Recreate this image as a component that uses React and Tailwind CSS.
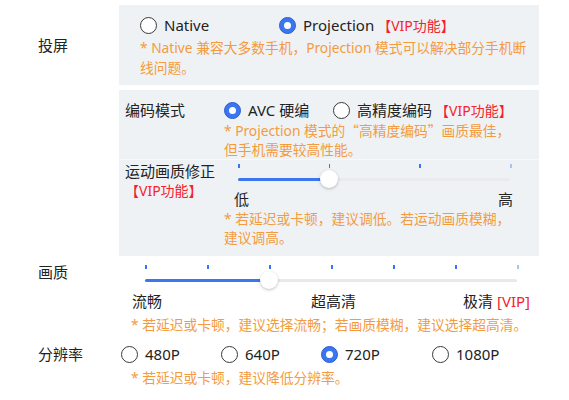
import React, { useState } from 'react';

const Radio = ({ checked, label, onClick, className = '' }) => (
    <div onClick={onClick} className={`flex items-center gap-[7px] cursor-pointer ${className}`}>
        {checked ? (
            <span className="w-[17px] h-[17px] rounded-full bg-[#3a76f0] border border-[#2d5fcf] flex items-center justify-center shrink-0">
                <span className="w-[7px] h-[7px] rounded-full bg-white" />
            </span>
        ) : (
            <span className="w-[17px] h-[17px] rounded-full bg-white border border-[#3a3a3a] shrink-0" />
        )}
        <span>{label}</span>
    </div>
);

// ticks + track + thumb, value is a tick index
const Slider = ({ width, ticks, value, dim }) => {
    const step = width / (ticks - 1);
    return (
        <div className="relative h-[26px]" style={{ width }}>
            {Array.from({ length: ticks }).map((_, i) => (
                <span
                    key={i}
                    className={`absolute top-0 h-[4px] ${i === ticks - 1 ? 'w-[2px] bg-[#a9c2f2]' : 'w-[1.5px] bg-[#3a76f0]'}`}
                    style={{ left: i * step }}
                />
            ))}
            <div className={`absolute left-0 right-0 top-[14px] h-[3px] rounded-full ${dim ? 'bg-[#e9ebee]' : 'bg-[#e8e9eb]'}`} />
            <div className="absolute left-0 top-[14px] h-[3px] rounded-full bg-[#3a76f0]" style={{ width: value * step }} />
            <div
                className="absolute top-[6px] w-[18px] h-[18px] -ml-[9px] rounded-full bg-white shadow-[0_1px_3px_rgba(0,0,0,0.25)]"
                style={{ left: value * step }}
            />
        </div>
    );
};

const VIP = ({ className = '' }) => <span className={`text-[#f5222d] text-[14px] ${className}`}>【VIP功能】</span>;

export default function App() {
    const [mode, setMode] = useState('projection');
    const [codec, setCodec] = useState('avc');
    const [res, setRes] = useState('720P');

    return (
        <div className="w-[569px] h-[400px] bg-white text-[#222] text-[15px] font-['Noto_Sans','Noto_Sans_CJK_SC',sans-serif] overflow-hidden">
            {/* 投屏 */}
            <div className="flex pt-[5px]">
                <div className="w-[119px] pl-[38px] flex items-center">投屏</div>
                <div className="w-[420px] bg-[#eff2f5] pl-[21px] pr-[2px] pt-[9px] pb-[7px]">
                    <div className="flex items-center h-[22px]">
                        <Radio checked={mode === 'native'} onClick={() => setMode('native')} label="Native" className="w-[139px]" />
                        <Radio checked={mode === 'projection'} onClick={() => setMode('projection')} label="Projection" />
                        <VIP className="ml-[3px]" />
                    </div>
                    <p className="mt-[2px] text-[13.75px] leading-[20px] text-[#f39b3e]">
                        * Native 兼容大多数手机，Projection 模式可以解决部分手机断线问题。
                    </p>
                </div>
            </div>

            {/* 编码 + 运动画质 */}
            <div className="ml-[119px] mt-[5px] w-[420px] bg-[#eff2f5]">
                <div className="flex pt-[10px] border-b border-[#f7f8fa]">
                    <div className="w-[105px] pl-[6px] leading-[21px]">编码模式</div>
                    <div className="flex-1 pr-[18px]">
                        <div className="flex items-center h-[21px]">
                            <Radio checked={codec === 'avc'} onClick={() => setCodec('avc')} label="AVC 硬编" className="w-[109px]" />
                            <Radio checked={codec === 'hq'} onClick={() => setCodec('hq')} label="高精度编码" />
                            <VIP className="ml-[3px]" />
                        </div>
                        <p className="text-[13.75px] leading-[19px] text-[#f39b3e]">
                            * Projection 模式的<span className="font-['Noto_Sans_CJK_SC']">“</span>高精度编码<span className="font-['Noto_Sans_CJK_SC']">”</span>画质最佳，但手机需要较高性能。
                        </p>
                    </div>
                </div>
                <div className="flex pt-[2px] pb-[9px]">
                    <div className="w-[105px] pl-[6px] leading-[19px]">
                        <div>运动画质修正</div>
                        <VIP />
                    </div>
                    <div className="flex-1 pr-[18px]">
                        <div className="ml-[14px] mt-[2px]">
                            <Slider width={272} ticks={4} value={1} dim />
                        </div>
                        <div className="ml-[10px] w-[279px] flex justify-between leading-[18px]">
                            <span>低</span>
                            <span>高</span>
                        </div>
                        <p className="mt-[1px] text-[13.75px] leading-[19px] text-[#f39b3e]">
                            * 若延迟或卡顿，建议调低。若运动画质模糊，建议调高。
                        </p>
                    </div>
                </div>
            </div>

            {/* 画质 */}
            <div className="flex">
                <div className="w-[119px] pl-[38px] pt-[6px] leading-[20px]">画质</div>
                <div className="flex-1">
                    <div className="ml-[26px] mt-[9px]">
                        <Slider width={372} ticks={7} value={2} />
                    </div>
                    <div className="pl-[13px] w-[411px] flex leading-[20px]">
                        <span>流畅</span>
                        <span className="ml-[149px]">超高清</span>
                        <span className="ml-auto">
                            极清 <span className="text-[#f5222d]">[VIP]</span>
                        </span>
                    </div>
                    <p className="pl-[12px] mt-[4px] text-[13.75px] leading-[20px] text-[#f39b3e]">
                        * 若延迟或卡顿，建议选择流畅；若画质模糊，建议选择超高清。
                    </p>
                </div>
            </div>

            {/* 分辨率 */}
            <div className="flex mt-[8px]">
                <div className="w-[119px] pl-[38px] leading-[22px]">分辨率</div>
                <div className="flex-1">
                    <div className="flex items-center h-[22px] ml-[2px]">
                        {['480P', '640P', '720P', '1080P'].map((r, i) => (
                            <Radio
                                key={r}
                                checked={res === r}
                                onClick={() => setRes(r)}
                                label={r}
                                className={i === 2 ? 'w-[111px]' : 'w-[100px]'}
                            />
                        ))}
                    </div>
                    <p className="pl-[12px] mt-[3px] text-[13.75px] leading-[20px] text-[#f39b3e]">
                        * 若延迟或卡顿，建议降低分辨率。
                    </p>
                </div>
            </div>
        </div>
    );
}
